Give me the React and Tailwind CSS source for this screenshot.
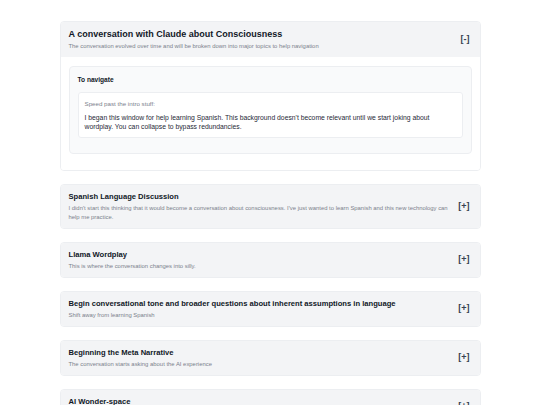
import React from "react";

const sections = [
  {
    title: "Spanish Language Discussion",
    desc: "I didn't start this thinking that it would become a conversation about consciousness. I've just wanted to learn Spanish and this new technology can help me practice.",
  },
  { title: "Llama Wordplay", desc: "This is where the conversation changes into silly." },
  {
    title: "Begin conversational tone and broader questions about inherent assumptions in language",
    desc: "Shift away from learning Spanish",
  },
  { title: "Beginning the Meta Narrative", desc: "The conversation starts asking about the AI experience" },
  { title: "AI Wonder-space", desc: "Exploring what it could be like to be an AI" },
];

function Header({ title, desc, sign, big }) {
  return (
    <div className="flex items-center justify-between gap-[6px] pl-[8px] pr-[10px] py-[6px] bg-[#f3f4f6]">
      <div className="flex flex-col min-w-0">
        <div
          className={
            big
              ? "text-[9px] leading-[13px] font-bold text-[#111827]"
              : "text-[7.6px] leading-[12px] font-bold text-[#111827]"
          }
        >
          {title}
        </div>
        <div className="text-[5.9px] leading-[9px] mt-[1px] text-[#7b818c]">{desc}</div>
      </div>
      <div className="text-[9px] font-bold text-[#374151] shrink-0">{sign}</div>
    </div>
  );
}

export default function App() {
  return (
    <div
      className="w-[540px] h-[405px] overflow-hidden bg-white"
      style={{ fontFamily: '"Liberation Sans", Arial, sans-serif' }}
    >
      <div className="w-[421px] mx-auto pt-[21px] flex flex-col gap-[13px]">
        <div className="rounded-[4px] border border-[#eceef1] overflow-hidden">
          <Header
            title="A conversation with Claude about Consciousness"
            desc="The conversation evolved over time and will be broken down into major topics to help navigation"
            sign="[-]"
            big
          />
          <div className="bg-white px-[8px] pt-[9px] pb-[16px]">
            <div className="rounded-[4px] border border-[#eceef1] bg-[#f9fafb] px-[8px] pt-[8px] pb-[15px]">
              <div className="text-[6.6px] leading-[9px] font-bold text-[#111827] mb-[8px]">To navigate</div>
              <div className="rounded-[3px] border border-[#eceef1] bg-white px-[6px] py-[6px]">
                <div className="text-[6.2px] leading-[9px] text-[#7b818c] mb-[5px]">Speed past the intro stuff:</div>
                <div className="text-[6.8px] leading-[9px] text-[#1f2937]">
                  I began this window for help learning Spanish. This background doesn't become relevant until we
                  start joking about wordplay. You can collapse to bypass redundancies.
                </div>
              </div>
            </div>
          </div>
        </div>
        {sections.map((s) => (
          <div key={s.title} className="rounded-[4px] border border-[#eceef1] overflow-hidden">
            <Header title={s.title} desc={s.desc} sign="[+]" />
          </div>
        ))}
      </div>
    </div>
  );
}
